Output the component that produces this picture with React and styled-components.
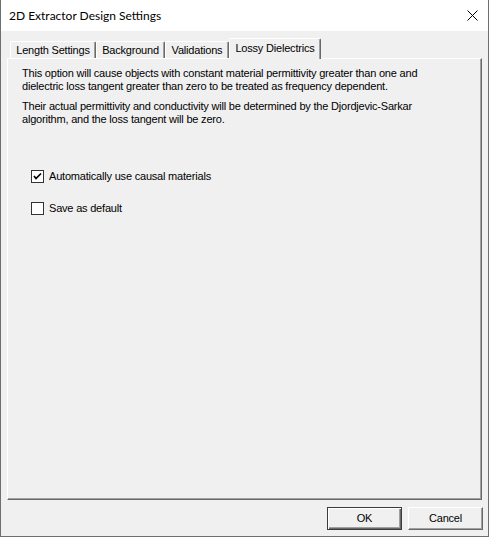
import React, { useState } from "react";
import styled, { createGlobalStyle } from "styled-components";

const GlobalStyle = createGlobalStyle`
  html, body {
    margin: 0;
    padding: 0;
    background: #f0f0f0;
  }
  * {
    box-sizing: border-box;
  }
`;

const Window = styled.div`
  width: 489px;
  height: 537px;
  display: flex;
  flex-direction: column;
  background: #f0f0f0;
  border: 1px solid #6f6f6f;
  border-top: none;
  font-family: "Liberation Sans", Arial, sans-serif;
  font-size: 11px;
  letter-spacing: -0.2px;
  color: #000;
`;

const TitleBar = styled.div`
  height: 31px;
  flex: none;
  background: #fff;
  display: flex;
  align-items: center;
  justify-content: space-between;
  padding: 0 10px 0 8px;
`;

const TitleText = styled.span`
  font-family: Lato, "Noto Sans", sans-serif;
  font-size: 12px;
  letter-spacing: 0;
  color: #000;
  padding-bottom: 1px;
`;

const CloseButton = styled.button`
  width: 12px;
  height: 12px;
  padding: 0;
  border: none;
  background: none;
  display: flex;
  align-items: center;
  justify-content: center;
  margin-bottom: 1px;
`;

const Content = styled.div`
  flex: 1;
  display: flex;
  flex-direction: column;
  padding: 7px 0 0 6px;
`;

const TabStrip = styled.div`
  height: 20px;
  display: flex;
  align-items: flex-end;
  padding-left: 3px;
`;

const Tab = styled.div`
  position: relative;
  z-index: ${(p) => (p.$active ? 1 : 0)};
  width: ${(p) => p.$width}px;
  height: ${(p) => (p.$active ? 21 : 17)}px;
  margin-bottom: ${(p) => (p.$active ? -1 : 0)}px;
  display: flex;
  align-items: center;
  justify-content: center;
  padding-bottom: ${(p) => (p.$active ? 3 : 0)}px;
  background: #f0f0f0;
  border-top: 1px solid #fff;
  border-left: 1px solid #fff;
  border-right: 1px solid #696969;
  box-shadow: inset -1px 0 #a0a0a0;
  border-radius: 2px 2px 0 0;
  white-space: nowrap;
  cursor: default;
`;

const Panel = styled.div`
  width: 475px;
  height: 442px;
  border-top: 1px solid #fff;
  border-left: 1px solid #fff;
  border-right: 1px solid #696969;
  border-bottom: 1px solid #696969;
  box-shadow: inset -1px -1px #a0a0a0;
  padding: 8px 14px 0 14px;
`;

const Paragraph = styled.p`
  margin: 0 0 7px 0;
  line-height: 13px;
`;

const Options = styled.div`
  margin: 44px 0 0 9px;
  display: flex;
  flex-direction: column;
  gap: 19px;
`;

const CheckRow = styled.label`
  display: flex;
  align-items: center;
  gap: 5px;
  height: 13px;
  line-height: 13px;
`;

const Box = styled.span`
  width: 13px;
  height: 13px;
  flex: none;
  background: #fff;
  border: 1px solid #333;
  display: flex;
`;

const Footer = styled.div`
  display: flex;
  justify-content: flex-end;
  gap: 6px;
  margin-top: 7px;
  padding-right: 5px;
`;

const Button = styled.button`
  width: 75px;
  height: 23px;
  padding: 0 0 1px 0;
  font-family: "Liberation Sans", Arial, sans-serif;
  font-size: 11px;
  letter-spacing: -0.2px;
  color: #000;
  background: #f0f0f0;
  border: 1px solid;
  border-color: ${(p) =>
    p.$primary ? "#3c3c3c" : "#fff #696969 #696969 #fff"};
  box-shadow: ${(p) =>
    p.$primary
      ? "inset 1px 1px #fff, inset -1px -1px #696969, inset -2px -2px #a0a0a0"
      : "inset -1px -1px #a0a0a0"};
`;

function CheckBox({ label, checked, onChange }) {
  return (
    <CheckRow onClick={onChange}>
      <Box>
        {checked && (
          <svg width="11" height="11" viewBox="0 0 11 11">
            <polyline
              points="2,5 4,7.5 9,2.5"
              fill="none"
              stroke="#000"
              strokeWidth="1.7"
            />
          </svg>
        )}
      </Box>
      <span>{label}</span>
    </CheckRow>
  );
}

const tabs = [
  { name: "Length Settings", width: 86 },
  { name: "Background", width: 69 },
  { name: "Validations", width: 64 },
  { name: "Lossy Dielectrics", width: 92 },
];

export default function App() {
  const [causal, setCausal] = useState(true);
  const [saveDefault, setSaveDefault] = useState(false);

  return (
    <>
      <GlobalStyle />
      <Window>
        <TitleBar>
          <TitleText>2D Extractor Design Settings</TitleText>
          <CloseButton>
            <svg width="11" height="11" viewBox="0 0 11 11">
              <path d="M0.5 0.5 L10.5 10.5 M10.5 0.5 L0.5 10.5" stroke="#000" strokeWidth="1" />
            </svg>
          </CloseButton>
        </TitleBar>
        <Content>
          <TabStrip>
            {tabs.map((t) => (
              <Tab key={t.name} $width={t.width} $active={t.name === "Lossy Dielectrics"}>
                {t.name}
              </Tab>
            ))}
          </TabStrip>
          <Panel>
            <Paragraph>
              This option will cause objects with constant material permittivity greater than one and
              <br />
              dielectric loss tangent greater than zero to be treated as frequency dependent.
            </Paragraph>
            <Paragraph>
              Their actual permittivity and conductivity will be determined by the Djordjevic-Sarkar
              <br />
              algorithm, and the loss tangent will be zero.
            </Paragraph>
            <Options>
              <CheckBox
                label="Automatically use causal materials"
                checked={causal}
                onChange={() => setCausal(!causal)}
              />
              <CheckBox
                label="Save as default"
                checked={saveDefault}
                onChange={() => setSaveDefault(!saveDefault)}
              />
            </Options>
          </Panel>
          <Footer>
            <Button $primary>OK</Button>
            <Button>Cancel</Button>
          </Footer>
        </Content>
      </Window>
    </>
  );
}
